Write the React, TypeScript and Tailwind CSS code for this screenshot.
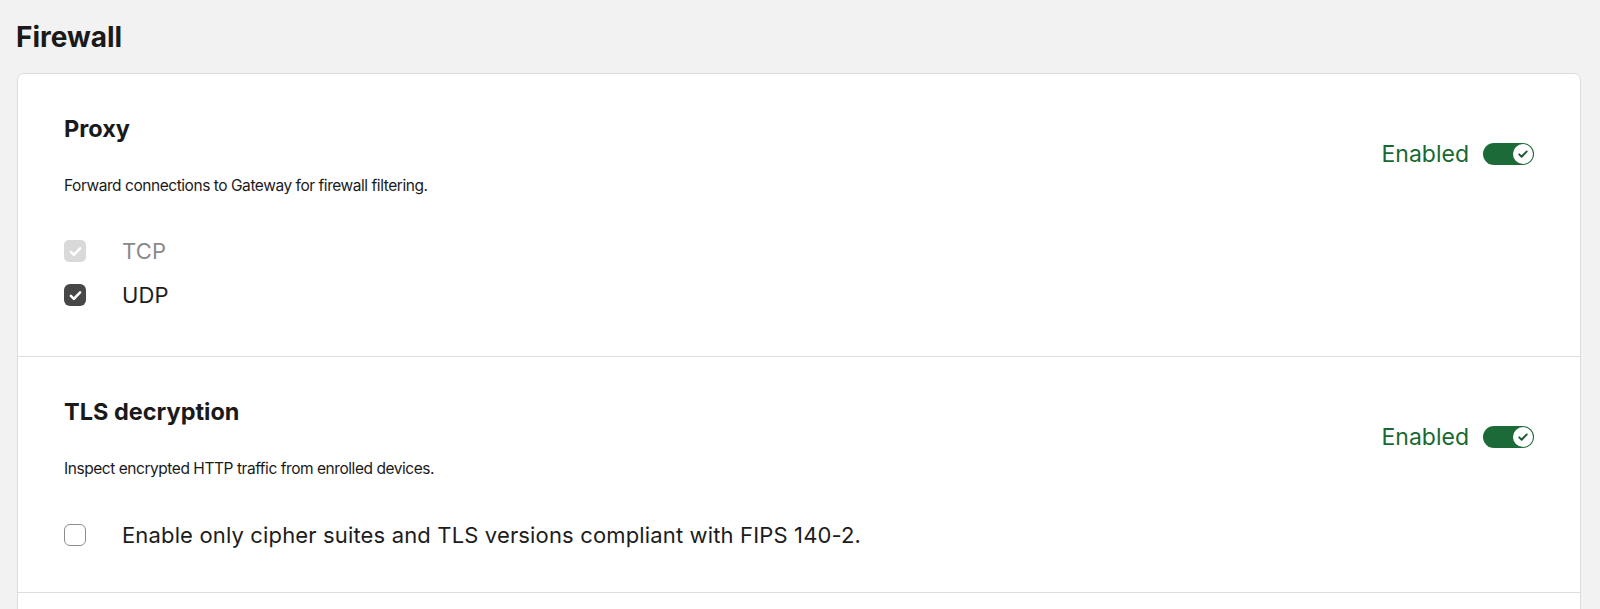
import { useState } from 'react';

function CheckIcon({ className, strokeWidth = 3.2 }: { className?: string; strokeWidth?: number }) {
  return (
    <svg viewBox="0 0 24 24" className={className} fill="none" stroke="currentColor" strokeWidth={strokeWidth} strokeLinecap="round" strokeLinejoin="round">
      <path d="M5.5 12.5l4.2 4.2L18.5 7.5" />
    </svg>
  );
}

function Checkbox({ checked, disabled, onChange }: { checked: boolean; disabled?: boolean; onChange?: () => void }) {
  if (disabled) {
    return (
      <span className="flex h-[22px] w-[22px] shrink-0 items-center justify-center rounded-[5px] bg-[#d9d9d9] text-white">
        <CheckIcon className="h-[17px] w-[17px]" strokeWidth={3.6} />
      </span>
    );
  }
  return (
    <button
      type="button"
      onClick={onChange}
      className={`flex h-[22px] w-[22px] shrink-0 items-center justify-center rounded-[6px] ${checked ? 'bg-[#474747] text-white' : 'border-[1.5px] border-[#8c8c8c] bg-white'}`}
    >
      {checked && <CheckIcon className="h-[17px] w-[17px]" strokeWidth={3.6} />}
    </button>
  );
}

function Toggle({ on, onChange }: { on: boolean; onChange: () => void }) {
  return (
    <div className="flex items-center gap-[14px]">
      <span className="text-[23px] leading-[28px] text-[#17692f]">{on ? 'Enabled' : 'Disabled'}</span>
      <button
        type="button"
        onClick={onChange}
        className={`flex h-[22px] w-[51px] items-center rounded-full px-px ${on ? 'justify-end bg-[#1b6a38]' : 'justify-start bg-[#bdbdbd]'}`}
      >
        <span className="flex h-[20px] w-[20px] items-center justify-center rounded-full bg-white text-[#1b5a30]">
          {on && <CheckIcon className="h-[14px] w-[14px]" strokeWidth={3.2} />}
        </span>
      </button>
    </div>
  );
}

function Option({ label, checked, disabled, onChange }: { label: string; checked: boolean; disabled?: boolean; onChange?: () => void }) {
  return (
    <label className="flex h-[44px] items-center gap-[36px]">
      <Checkbox checked={checked} disabled={disabled} onChange={onChange} />
      <span className={`text-[22px] leading-[28px] tracking-[0.15px] ${disabled ? 'text-[#8a8a8a]' : 'text-[#1c1c1c]'}`}>{label}</span>
    </label>
  );
}

function Section({ title, description, on, onToggle, children }: {
  title: string;
  description: string;
  on: boolean;
  onToggle: () => void;
  children: React.ReactNode;
}) {
  return (
    <div className="border-b border-[#dedede] px-[46px] pt-[41px]">
      <div className="flex items-center justify-between">
        <div>
          <h2 className="text-[23.5px] leading-[28px] font-bold text-[#1a1a1a]">{title}</h2>
          <p className="mt-[32px] text-[15.5px] leading-[22px] tracking-[-0.45px] text-[#1a1a1a]">{description}</p>
        </div>
        <div className="mb-[4px]">
          <Toggle on={on} onChange={onToggle} />
        </div>
      </div>
      {children}
    </div>
  );
}

export default function App() {
  const [proxy, setProxy] = useState(true);
  const [tls, setTls] = useState(true);
  const [udp, setUdp] = useState(true);
  const [fips, setFips] = useState(false);

  return (
    <div className="h-screen overflow-hidden bg-[#f2f2f2] pl-[17px] pr-[19px] pt-[21px] font-['Inter',sans-serif]">
      <h1 className="-ml-px text-[28px] leading-[32px] font-bold text-[#1a1a1a]">Firewall</h1>
      <div className="mt-[20px] overflow-hidden rounded-[7px] border border-[#dcdcdc] bg-white">
        <Section
          title="Proxy"
          description="Forward connections to Gateway for firewall filtering."
          on={proxy}
          onToggle={() => setProxy(!proxy)}
        >
          <div className="mt-[32px] pb-[39px]">
            <Option label="TCP" checked disabled />
            <Option label="UDP" checked={udp} onChange={() => setUdp(!udp)} />
          </div>
        </Section>
        <Section
          title="TLS decryption"
          description="Inspect encrypted HTTP traffic from enrolled devices."
          on={tls}
          onToggle={() => setTls(!tls)}
        >
          <div className="mt-[33px] pb-[35px]">
            <Option
              label="Enable only cipher suites and TLS versions compliant with FIPS 140-2."
              checked={fips}
              onChange={() => setFips(!fips)}
            />
          </div>
        </Section>
        <div className="h-[120px]" />
      </div>
    </div>
  );
}
